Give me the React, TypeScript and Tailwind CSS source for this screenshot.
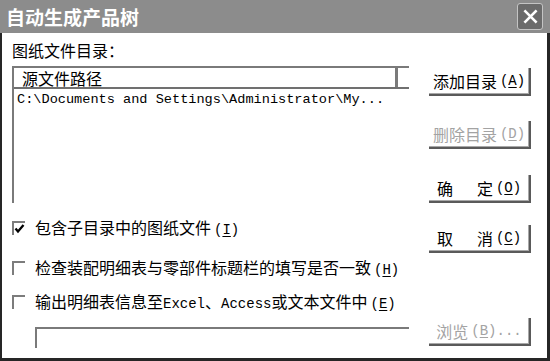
import type { ReactNode } from "react";

const CJK = "font-['Noto_Sans_CJK_SC',sans-serif]";
const MONO = "font-['Liberation_Mono',monospace]";

// hotkey suffix like (A) with the letter underlined
function Hot({ k }: { k: string }) {
  return (
    <span className={`${MONO} ml-[3px] text-[14px]`}>
      (<span className="underline underline-offset-2">{k}</span>)
    </span>
  );
}

function Btn({ children, disabled, className = "" }: { children: ReactNode; disabled?: boolean; className?: string }) {
  return (
    <div
      className={`flex h-[28px] w-[102px] items-center justify-center border-r-2 border-b-2 border-[#5a5a5a] text-[16px] leading-none shadow-[inset_-1px_-1px_0_#a8a8a8] ${
        disabled ? "text-[#a3a3a3]" : "text-black"
      } ${className}`}
    >
      {children}
    </div>
  );
}

function Check({ checked }: { checked?: boolean }) {
  return (
    <div className="relative h-[14px] w-[13px] shrink-0 border-t-2 border-l-2 border-[#7c7c7c] bg-white">
      {checked && (
        <svg viewBox="0 0 11 12" className="absolute left-[0px] top-[0px] h-[12px] w-[11px]">
          <path d="M1.5 5.5 L4 8.5 L9.5 2" fill="none" stroke="#000" strokeWidth="2.3" />
        </svg>
      )}
    </div>
  );
}

function CheckRow({ checked, children, className = "" }: { checked?: boolean; children: ReactNode; className?: string }) {
  return (
    <div className={`flex h-[20px] items-center gap-[10px] whitespace-nowrap text-[16px] leading-none ${className}`}>
      <Check checked={checked} />
      <span>{children}</span>
    </div>
  );
}

export default function App() {
  return (
    <div className={`flex h-[361px] w-[550px] flex-col bg-white text-black ${CJK}`}>
      {/* Title bar */}
      <div className="flex h-[33px] shrink-0 items-center justify-between bg-[#8c8c8c] pl-[6px] pr-[7px]">
        <span className="text-[19px] font-bold leading-none text-white">自动生成产品树</span>
        <div className="flex h-[27px] w-[26px] items-center justify-center rounded-[3px] border border-[#c4c4c4] bg-[#6b6b6b]">
          <svg viewBox="0 0 16 16" className="h-[15px] w-[15px]">
            <path d="M2.5 2.5l11 11M13.5 2.5l-11 11" stroke="#fff" strokeWidth="2.8" strokeLinecap="square" />
          </svg>
        </div>
      </div>

      {/* Body */}
      <div className="flex flex-1 border-b-[3px] border-l-2 border-r-[3px] border-[#262626] pl-[10px]">
        {/* Left column */}
        <div className="flex w-[397px] flex-col pt-[7px]">
          <div className="h-[20px] text-[16px] leading-[20px]">图纸文件目录：</div>

          {/* List view */}
          <div className="mt-[6px] flex h-[137px] flex-col border-t-2 border-l-2 border-[#7a7a7a]">
            <div className="flex h-[21px] shrink-0 border-b-2 border-[#707070]">
              <div className="flex flex-1 items-center border-r-[3px] border-[#7a7a7a] pl-[8px] pt-[1px] text-[16px] leading-none">
                源文件路径
              </div>
              <div className="w-[11px]" />
            </div>
            <div className={`pl-[3px] pt-[3px] text-[13.6px] leading-[16px] ${MONO}`}>
              C:\Documents and Settings\Administrator\My...
            </div>
          </div>

          <CheckRow checked className="mt-[15px]">
            包含子目录中的图纸文件<Hot k="I" />
          </CheckRow>
          <CheckRow className="mt-[20px]">
            检查装配明细表与零部件标题栏的填写是否一致<Hot k="H" />
          </CheckRow>
          <CheckRow className="mt-[14px]">
            输出明细表信息至<span className={`${MONO} text-[14px]`}>Excel</span>、
            <span className={`${MONO} text-[14px]`}>Access</span>或文本文件中<Hot k="E" />
          </CheckRow>

          <div className="ml-[23px] mt-[15px] h-[21px] w-[374px] border-t-2 border-l-2 border-[#7a7a7a]" />
        </div>

        {/* Right column: buttons */}
        <div className="ml-[20px] flex flex-col">
          <Btn className="mt-[35px]">
            添加目录<Hot k="A" />
          </Btn>
          <Btn disabled className="mt-[25px]">
            删除目录<Hot k="D" />
          </Btn>
          <Btn className="mt-[26px]">
            确<span className="w-[24px]" />定<Hot k="O" />
          </Btn>
          <Btn className="mt-[22px]">
            取<span className="w-[24px]" />消<Hot k="C" />
          </Btn>
          <Btn disabled className="mt-[65px]">
            浏览<Hot k="B" />
            <span className={`${MONO} text-[14px]`}>...</span>
          </Btn>
        </div>
      </div>
    </div>
  );
}
